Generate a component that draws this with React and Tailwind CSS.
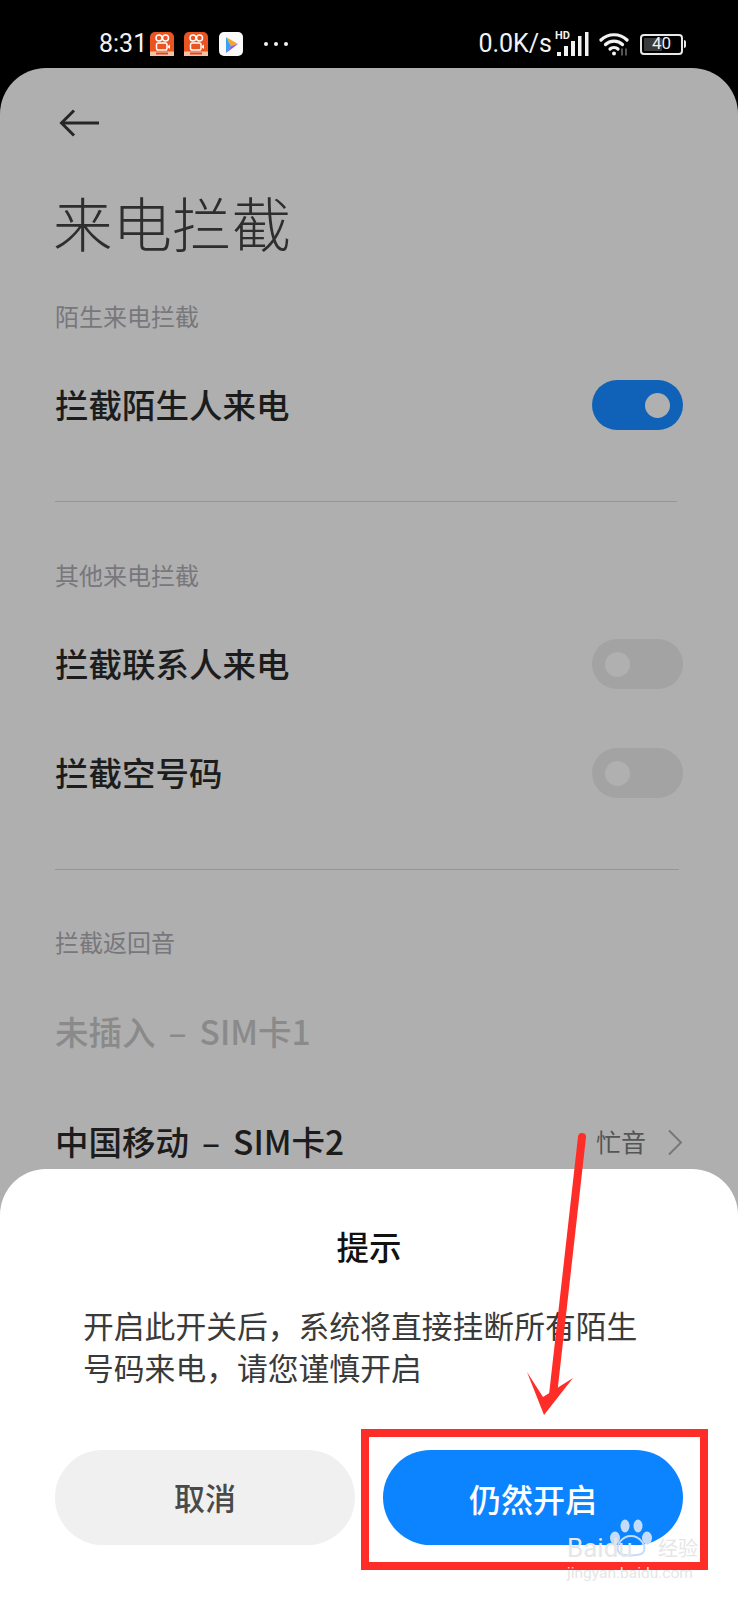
import React from "react";

const cjk = "font-['Noto_Sans_CJK_SC','Noto_Sans',sans-serif]";

const AppBadge = () => (
  <svg width="24" height="24" viewBox="0 0 24 24">
    <rect width="24" height="24" rx="5" fill="#ea5420" />
    <rect y="19.5" width="24" height="4.5" fill="#f6c2a4" />
    <rect x="6" y="20.5" width="12" height="2" fill="#e0481c" />
    <circle cx="9" cy="6" r="3" fill="none" stroke="#fff" strokeWidth="1.5" />
    <circle cx="15.5" cy="6" r="3" fill="none" stroke="#fff" strokeWidth="1.5" />
    <rect x="6.5" y="11" width="10.5" height="7" rx="1.8" fill="none" stroke="#fff" strokeWidth="1.5" />
    <path d="M18 14 L20 12.5 V17 L18 15.5 Z" fill="#fff" />
  </svg>
);

const PlayBadge = () => (
  <svg width="24" height="24" viewBox="0 0 24 24">
    <rect width="24" height="24" rx="5" fill="#fafafa" />
    <path d="M7 5 L19 12 L12 14 Z" fill="#f4a52c" />
    <path d="M7 5 L12 14 L7 21 Z" fill="#3aa0f0" />
    <path d="M7 21 L12 14 L19 12 Z" fill="#8a5cf0" />
  </svg>
);

const Signal = () => (
  <svg width="34" height="30" viewBox="0 0 34 30" fill="#f2f2f2">
    <text x="0" y="10" fontSize="11" fontWeight="700" fontFamily="Roboto, sans-serif" fill="#f2f2f2">HD</text>
    <rect x="2" y="23" width="4" height="4" />
    <rect x="9" y="17" width="4" height="10" />
    <rect x="16" y="12" width="4" height="15" />
    <rect x="23" y="7" width="3.5" height="20" />
    <rect x="30" y="3" width="3.5" height="24" />
  </svg>
);

const Wifi = () => (
  <svg width="30" height="24" viewBox="0 0 30 24" fill="none" stroke="#f2f2f2" strokeWidth="3.2" strokeLinecap="round">
    <path d="M2 8 C9 1 21 1 28 8" />
    <path d="M6.5 12.5 C11 8 19 8 23.5 12.5" />
    <path d="M11 17 C13 15 17 15 19 17" />
    <circle cx="15" cy="21.5" r="2" fill="#f2f2f2" stroke="none" />
    <path d="M23 17 V23 M27 17 V23" stroke="#777" strokeWidth="1.4" />
  </svg>
);

const Battery = () => (
  <div className="flex items-center">
    <div className="flex h-[21px] w-[43px] items-center rounded-[4px] border-2 border-[#e8e8e8] p-[2px]">
      <div className="flex h-full w-[18px] items-center justify-end rounded-[1px] bg-[#3a3a3a] font-['Roboto'] text-[17px] text-[#eee]">
        <span className="-mr-[9px]">40</span>
      </div>
    </div>
    <div className="ml-[1px] h-[8px] w-[2px] rounded-r bg-[#e8e8e8]"></div>
  </div>
);

const Toggle = ({ on }) => (
  <div
    className={
      on
        ? "flex h-[50px] w-[91px] items-center justify-end rounded-full bg-[#0f62b8] pr-[13px]"
        : "flex h-[50px] w-[91px] items-center justify-start rounded-full bg-[#a3a3a3] pl-[13px]"
    }
  >
    <div className="h-[25px] w-[25px] rounded-full bg-[#b0b0b0]"></div>
  </div>
);

const SectionLabel = ({ children, className }) => (
  <div className={"flex h-[30px] items-center pb-[4px] text-[24px] text-[#77777c] " + className}>{children}</div>
);

const Row = ({ label, on, className }) => (
  <div className={"flex h-[50px] items-center justify-between " + className}>
    <span className="mb-[2px] text-[33.5px] font-medium text-[#1c1c1c]">{label}</span>
    <Toggle on={on} />
  </div>
);

const App = () => {
  return (
    <div className={"relative h-[1600px] w-[738px] overflow-hidden bg-black " + cjk}>
      {/* status bar */}
      <div className="flex h-[68px] items-center pl-[99px] pr-[52px] pt-[20px] text-[#f2f2f2]">
        <span className="w-[51px] font-['Roboto'] text-[25px]">8:31</span>
        <AppBadge />
        <div className="ml-[10px]">
          <AppBadge />
        </div>
        <div className="ml-[11px]">
          <PlayBadge />
        </div>
        <span className="ml-[21px] flex gap-[6px]">
          <i className="h-[4px] w-[4px] rounded-full bg-[#f2f2f2]"></i>
          <i className="h-[4px] w-[4px] rounded-full bg-[#f2f2f2]"></i>
          <i className="h-[4px] w-[4px] rounded-full bg-[#f2f2f2]"></i>
        </span>
        <span className="ml-auto font-['Roboto'] text-[25px]">0.0K/s</span>
        <div className="ml-[3px]">
          <Signal />
        </div>
        <div className="ml-[10px]">
          <Wifi />
        </div>
        <div className="ml-[11px]">
          <Battery />
        </div>
      </div>

      {/* settings page behind the dialog */}
      <div className="h-[1532px] rounded-t-[46px] bg-[#afafaf] pl-[55px] pr-[55px] pt-[41px]">
        <svg width="42" height="28" viewBox="0 0 42 28" fill="none" stroke="#262626" strokeWidth="3" className="ml-[4px]">
          <path d="M40 14 H3" />
          <path d="M15 1.5 L2.5 14 L15 26.5" />
        </svg>
        <div className="-ml-[2px] mt-[50px] flex h-[70px] items-center text-[59.5px] font-light text-[#2e2e2e]">来电拦截</div>

        <SectionLabel className="mt-[46px]">陌生来电拦截</SectionLabel>
        <Row label="拦截陌生人来电" on className="mt-[47px]" />
        <div className="mr-[6px] mt-[71px] h-px bg-[#969696]"></div>

        <SectionLabel className="mt-[60px]">其他来电拦截</SectionLabel>
        <Row label="拦截联系人来电" className="mt-[47px]" />
        <Row label="拦截空号码" className="mt-[59px]" />
        <div className="mr-[4px] mt-[71px] h-px bg-[#969696]"></div>

        <SectionLabel className="mt-[59px]">拦截返回音</SectionLabel>
        <div className="mt-[49px] flex h-[50px] items-center pb-[4px] text-[33.5px] font-medium text-[#8a8a8a]">
          <span>
            未插入<span className="mx-[13px]">–</span>SIM卡1
          </span>
        </div>
        <div className="mt-[59px] flex h-[50px] items-center justify-between">
          <span className="mb-[2px] text-[33.5px] font-medium text-[#1c1c1c]">
            中国移动<span className="mx-[13px]">–</span>SIM卡2
          </span>
          <span className="flex items-center text-[25px] text-[#555]">
            忙音
            <svg width="16" height="27" viewBox="0 0 16 27" fill="none" stroke="#777" strokeWidth="2" className="ml-[21px]">
              <path d="M2 1.5 L14 13.5 L2 25.5" />
            </svg>
          </span>
        </div>
      </div>

      {/* dialog sheet */}
      <div className="absolute inset-x-0 bottom-0 h-[431px] rounded-t-[46px] bg-white px-[55px] pt-[57px]">
        <div className="flex h-[40px] items-center justify-center text-[32.5px] font-medium text-[#111]">提示</div>
        <p className="mt-[38px] pl-[28px] text-[30.8px] leading-[42px] text-[#3a3a3a]">
          开启此开关后，系统将直接挂断所有陌生
          <br />
          号码来电，请您谨慎开启
        </p>
        <div className="mt-[62px] flex gap-[28px]">
          <button className="h-[95px] flex-1 rounded-full bg-[#f0f0f0] text-[31px] font-medium text-[#4a4a4a]">取消</button>
          <button className="h-[95px] flex-1 rounded-full bg-[#0d84ff] text-[32px] font-medium text-white">仍然开启</button>
        </div>
      </div>

      {/* red annotation */}
      <svg className="absolute left-0 top-0" width="738" height="1600" viewBox="0 0 738 1600" fill="none">
        <path d="M582 1137 L553 1395" stroke="#ff2d27" strokeWidth="8" strokeLinecap="round" />
        <path d="M544 1415 L527 1372 L543 1397 L573 1378 Z" fill="#ff2d27" />
      </svg>
      <div className="absolute left-[361px] top-[1429px] h-[141px] w-[347px] border-[8px] border-[#ff2d27]"></div>

      {/* watermark */}
      <div className="absolute left-[567px] top-[1519px] w-[131px] text-[#e6e6e6]">
        <svg width="42" height="38" viewBox="0 0 42 38" fill="#c4dcf8" className="ml-[43px]">
          <ellipse cx="15" cy="7" rx="4.5" ry="6.5" />
          <ellipse cx="28" cy="7" rx="4.5" ry="6.5" />
          <ellipse cx="5" cy="19" rx="5" ry="6.5" />
          <ellipse cx="37" cy="19" rx="5" ry="6.5" />
          <path d="M21 17 C30 17 36 26 34 32 C32 38 10 38 8 32 C6 26 12 17 21 17 Z" fill="none" stroke="#c4dcf8" strokeWidth="2" />
        </svg>
        <div className="-mt-[20px] flex h-[22px] items-center justify-between font-['Roboto'] text-[26px] leading-none">
          <span>Baidu</span>
          <span className={"text-[20px] " + cjk}>经验</span>
        </div>
        <div className="mt-[7px] font-['Roboto'] text-[15.5px] leading-none text-[#e6e6e6]">jingyan.baidu.com</div>
      </div>
    </div>
  );
};

export default App;
